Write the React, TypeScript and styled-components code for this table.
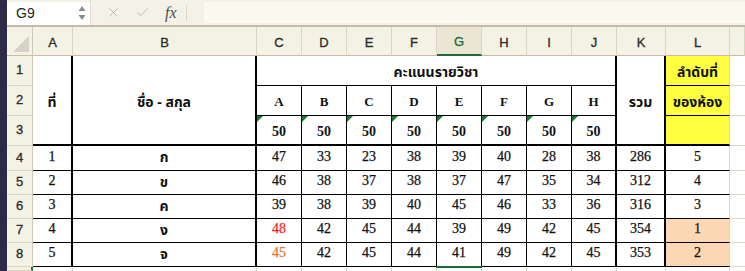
import { FC } from 'react';
import styled, { createGlobalStyle } from 'styled-components';
import { X, Check } from 'lucide-react';

const GlobalStyle = createGlobalStyle`
  html, body {
    margin: 0;
    padding: 0;
    background: #ffffff;
    overflow: hidden;
  }
  #root {
    width: 745px;
    height: 271px;
  }
`;

const SERIF = `'Liberation Serif', 'Times New Roman', serif`;
const SANS = `'Liberation Sans', Arial, sans-serif`;
const THAI = `Tahoma, 'Noto Sans Thai', 'Noto Sans', 'DejaVu Sans', sans-serif`;

const Window = styled.div`
  display: flex;
  width: 745px;
  height: 271px;
  overflow: hidden;
  background: #ffffff;
`;

const SideStrip = styled.div`
  flex: none;
  width: 7px;
  background: #2c2a47;
`;

const Workbook = styled.div`
  flex: 1;
  display: flex;
  flex-direction: column;
  min-width: 0;
`;

const FormulaBar = styled.div`
  flex: none;
  height: 25px;
  display: flex;
  align-items: center;
  background: #f4f2e7;
  border-bottom: 2px solid #c6baa8;
`;

const NameBox = styled.div`
  flex: none;
  width: 83px;
  height: 23px;
  margin-top: 1px;
  display: flex;
  align-items: center;
  justify-content: space-between;
  padding: 0 4px 0 9px;
  box-sizing: border-box;
  background: #ffffff;
  font-family: ${SANS};
  font-size: 14px;
  color: #1f1f1f;
`;

const Spinner = styled.svg`
  display: block;
`;

const BarButtons = styled.div`
  flex: none;
  display: flex;
  align-items: center;
  gap: 14px;
  padding: 0 10px 0 15px;
  height: 100%;
  border-left: 1px solid #e2ddd0;
  color: #bdbdbd;
`;

const Fx = styled.span`
  font-family: ${SERIF};
  font-style: italic;
  font-size: 16px;
  color: #4d4d4d;
  padding: 0 9px 0 1px;
  border-right: 1px solid #dcd7c9;
  line-height: 16px;
`;

const FormulaInput = styled.div`
  flex: 1;
  height: 21px;
  margin-left: 7px;
  background: #fbfaf1;
`;

const Sheet = styled.div`
  flex: 1;
  display: grid;
  grid-template-columns: 26px 40px 184px repeat(8, 45px) 49px 64px 1fr;
  grid-template-rows: 29px 30px 30px 30px 25px 24px 24px 24px 24px 1fr;
  min-height: 0;
`;

type TPlace = {
  $c: number;
  $r: number;
  $cs?: number;
  $rs?: number;
};

const placed = ({ $c, $r, $cs = 1, $rs = 1 }: TPlace) => `
  grid-column: ${$c} / span ${$cs};
  grid-row: ${$r} / span ${$rs};
`;

const Corner = styled.div<TPlace>`
  ${placed};
  position: relative;
  background: #f4f1e5;
  border-right: 1px solid #d2c8b6;
  border-bottom: 1px solid #c8bca9;
  box-sizing: border-box;

  &::after {
    content: '';
    position: absolute;
    right: 3px;
    bottom: 3px;
    border-left: 16px solid transparent;
    border-bottom: 16px solid #d6d2c8;
  }
`;

type TColHead = TPlace & { $active?: boolean };
const ColHead = styled.div<TColHead>`
  ${placed};
  display: flex;
  align-items: center;
  justify-content: center;
  box-sizing: border-box;
  padding-top: 2px;
  background: ${({ $active }) => ($active ? '#ebe5d4' : '#f4f1e5')};
  border-right: 1px solid #ddd5c4;
  border-bottom: ${({ $active }) =>
    $active ? '2px solid #1d6b3a' : '1px solid #c8bca9'};
  font-family: ${SANS};
  font-size: 13px;
  -webkit-text-stroke: 0.3px currentColor;
  color: ${({ $active }) => ($active ? '#1d6b3a' : '#2a2a2a')};
`;

type TRowHead = TPlace & { $active?: boolean };
const RowHead = styled.div<TRowHead>`
  ${placed};
  display: flex;
  align-items: center;
  justify-content: center;
  box-sizing: border-box;
  padding-bottom: 2px;
  background: #f4f1e5;
  border-right: ${({ $active }) =>
    $active ? '2px solid #1d6b3a' : '1px solid #d2c8b6'};
  border-bottom: 1px solid #ddd5c4;
  font-family: ${SANS};
  font-size: 13px;
  -webkit-text-stroke: 0.3px currentColor;
  color: #2a2a2a;
`;

type TCell = TPlace & {
  $right?: string;
  $bottom?: string;
  $bg?: string;
  $font?: string;
  $size?: number;
  $bold?: boolean;
  $color?: string;
  $flag?: boolean;
  $selected?: boolean;
  $shift?: number;
};
const Cell = styled.div<TCell>`
  ${placed};
  position: relative;
  display: flex;
  align-items: center;
  justify-content: center;
  box-sizing: border-box;
  padding-top: ${({ $shift = 0 }) => ($shift > 0 ? $shift : 0)}px;
  padding-bottom: ${({ $shift = 0 }) => ($shift < 0 ? -$shift : 0)}px;
  background: ${({ $bg }) => $bg ?? '#ffffff'};
  border-right: ${({ $right }) => $right ?? '1px solid #000'};
  border-bottom: ${({ $bottom }) => $bottom ?? '1px solid #000'};
  font-family: ${({ $font }) => $font ?? SERIF};
  font-size: ${({ $size }) => $size ?? 13}px;
  font-weight: ${({ $bold }) => ($bold ? 700 : 400)};
  -webkit-text-stroke: ${({ $bold }) => ($bold ? '0' : '0.25px currentColor')};
  color: ${({ $color }) => $color ?? '#111'};
  white-space: nowrap;

  &::before {
    content: '';
    display: ${({ $flag }) => ($flag ? 'block' : 'none')};
    position: absolute;
    top: 0;
    left: 0;
    border-top: 6px solid #177a2f;
    border-right: 6px solid transparent;
  }

  &::after {
    content: '';
    display: ${({ $selected }) => ($selected ? 'block' : 'none')};
    position: absolute;
    top: -1px;
    left: -1px;
    right: -1px;
    height: 2px;
    background: #1d6b3a;
  }
`;

const THICK = '2px solid #000';
const THIN = '1px solid #000';
const GRID = '1px solid #ddd6c7';
const YELLOW = '#ffff40';
const PEACH = '#fcd7b4';

const columns = ['A', 'B', 'C', 'D', 'E', 'F', 'G', 'H', 'I', 'J', 'K', 'L', ''];
const subjects = ['A', 'B', 'C', 'D', 'E', 'F', 'G', 'H'];

type TStudent = {
  no: number;
  name: string;
  scores: number[];
  total: number;
  rank: number;
};

const students: TStudent[] = [
  { no: 1, name: 'ก', scores: [47, 33, 23, 38, 39, 40, 28, 38], total: 286, rank: 5 },
  { no: 2, name: 'ข', scores: [46, 38, 37, 38, 37, 47, 35, 34], total: 312, rank: 4 },
  { no: 3, name: 'ค', scores: [39, 38, 39, 40, 45, 46, 33, 36], total: 316, rank: 3 },
  { no: 4, name: 'ง', scores: [48, 42, 45, 44, 39, 49, 42, 45], total: 354, rank: 1 },
  { no: 5, name: 'จ', scores: [45, 42, 45, 44, 41, 49, 42, 45], total: 353, rank: 2 },
];

const scoreColor = (row: number, col: number) => {
  if (col !== 0) return undefined;
  if (row === 3) return '#ff1a1a';
  if (row === 4) return '#e8762d';
  return undefined;
};

// grid column of subject i (C..J)
const subjectCol = (i: number) => 4 + i;
const rightOf = (i: number) => (i === 7 ? THICK : THIN);

const App: FC = () => {
  return (
    <Window>
      <GlobalStyle />
      <SideStrip />
      <Workbook>
        <FormulaBar>
          <NameBox>
            <span>G9</span>
            <Spinner width="8" height="16" viewBox="0 0 8 16">
              <path d="M4 1 L7.5 6 L0.5 6 Z" fill="#8a8a8a" />
              <path d="M4 15 L7.5 10 L0.5 10 Z" fill="#8a8a8a" />
            </Spinner>
          </NameBox>
          <BarButtons>
            <X size={15} strokeWidth={1.6} />
            <Check size={15} strokeWidth={1.6} />
            <Fx>fx</Fx>
          </BarButtons>
          <FormulaInput />
        </FormulaBar>

        <Sheet>
          <Corner $c={1} $r={1} />
          {columns.map((label, i) => (
            <ColHead key={`h${i}`} $c={i + 2} $r={1} $active={label === 'G'}>
              {label}
            </ColHead>
          ))}

          {[1, 2, 3, 4, 5, 6, 7, 8].map((n) => (
            <RowHead key={`r${n}`} $c={1} $r={n + 1}>
              {n}
            </RowHead>
          ))}
          <RowHead $c={1} $r={10} $active />

          {/* header block, rows 1-3 */}
          <Cell $c={2} $r={2} $rs={3} $right={THICK} $bottom={THICK} $font={THAI} $size={14} $bold $shift={4}>
            ที่
          </Cell>
          <Cell $c={3} $r={2} $rs={3} $right={THICK} $bottom={THICK} $font={THAI} $size={14} $bold $shift={4}>
            ชื่อ - สกุล
          </Cell>
          <Cell $c={4} $r={2} $cs={8} $right={THICK} $font={THAI} $size={14} $bold $shift={3}>
            คะแนนรายวิชา
          </Cell>
          {subjects.map((s, i) => (
            <Cell key={`s${s}`} $c={subjectCol(i)} $r={3} $right={rightOf(i)} $bold $size={13} $shift={3}>
              {s}
            </Cell>
          ))}
          {subjects.map((s, i) => (
            <Cell key={`m${s}`} $c={subjectCol(i)} $r={4} $right={rightOf(i)} $bottom={THICK} $bold $size={14} $flag $shift={4}>
              50
            </Cell>
          ))}
          <Cell $c={12} $r={2} $rs={3} $right={THICK} $bottom={THICK} $font={THAI} $size={14} $bold $shift={4}>
            รวม
          </Cell>
          <Cell $c={13} $r={2} $bg={YELLOW} $right={GRID} $font={THAI} $size={14} $bold $shift={3}>
            ลำดับที่
          </Cell>
          <Cell $c={13} $r={3} $bg={YELLOW} $right={GRID} $font={THAI} $size={14} $bold $shift={3}>
            ของห้อง
          </Cell>
          <Cell $c={13} $r={4} $bg={YELLOW} $right={GRID} $bottom={THICK} />
          {[2, 3, 4].map((r) => (
            <Cell key={`m${r}`} $c={14} $r={r} $right="none" $bottom={GRID} />
          ))}

          {/* data rows 4-8 */}
          {students.map((st, ri) => {
            const r = ri + 5;
            const peach = st.rank <= 2 ? PEACH : undefined;
            return [
              <Cell key={`a${r}`} $c={2} $r={r} $right={THICK} $size={14} $shift={-3}>
                {st.no}
              </Cell>,
              <Cell key={`b${r}`} $c={3} $r={r} $right={THICK} $font={THAI} $size={14} $bold $shift={-1}>
                {st.name}
              </Cell>,
              ...st.scores.map((v, i) => (
                <Cell
                  key={`v${r}-${i}`}
                  $c={subjectCol(i)}
                  $r={r}
                  $right={rightOf(i)}
                  $size={14}
                  $color={scoreColor(ri, i)}
                  $shift={-3}
                >
                  {v}
                </Cell>
              )),
              <Cell key={`k${r}`} $c={12} $r={r} $right={THICK} $size={14} $shift={-3}>
                {st.total}
              </Cell>,
              <Cell key={`l${r}`} $c={13} $r={r} $right={GRID} $bg={peach} $size={14} $shift={-3}>
                {st.rank}
              </Cell>,
              <Cell key={`x${r}`} $c={14} $r={r} $right="none" $bottom={GRID} />,
            ];
          })}

          {/* row 9 */}
          {Array.from({ length: 13 }, (_, i) => (
            <Cell
              key={`n${i}`}
              $c={i + 2}
              $r={10}
              $right={i === 12 ? 'none' : GRID}
              $bottom="none"
              $selected={i === 6}
            />
          ))}
        </Sheet>
      </Workbook>
    </Window>
  );
};

export default App;
